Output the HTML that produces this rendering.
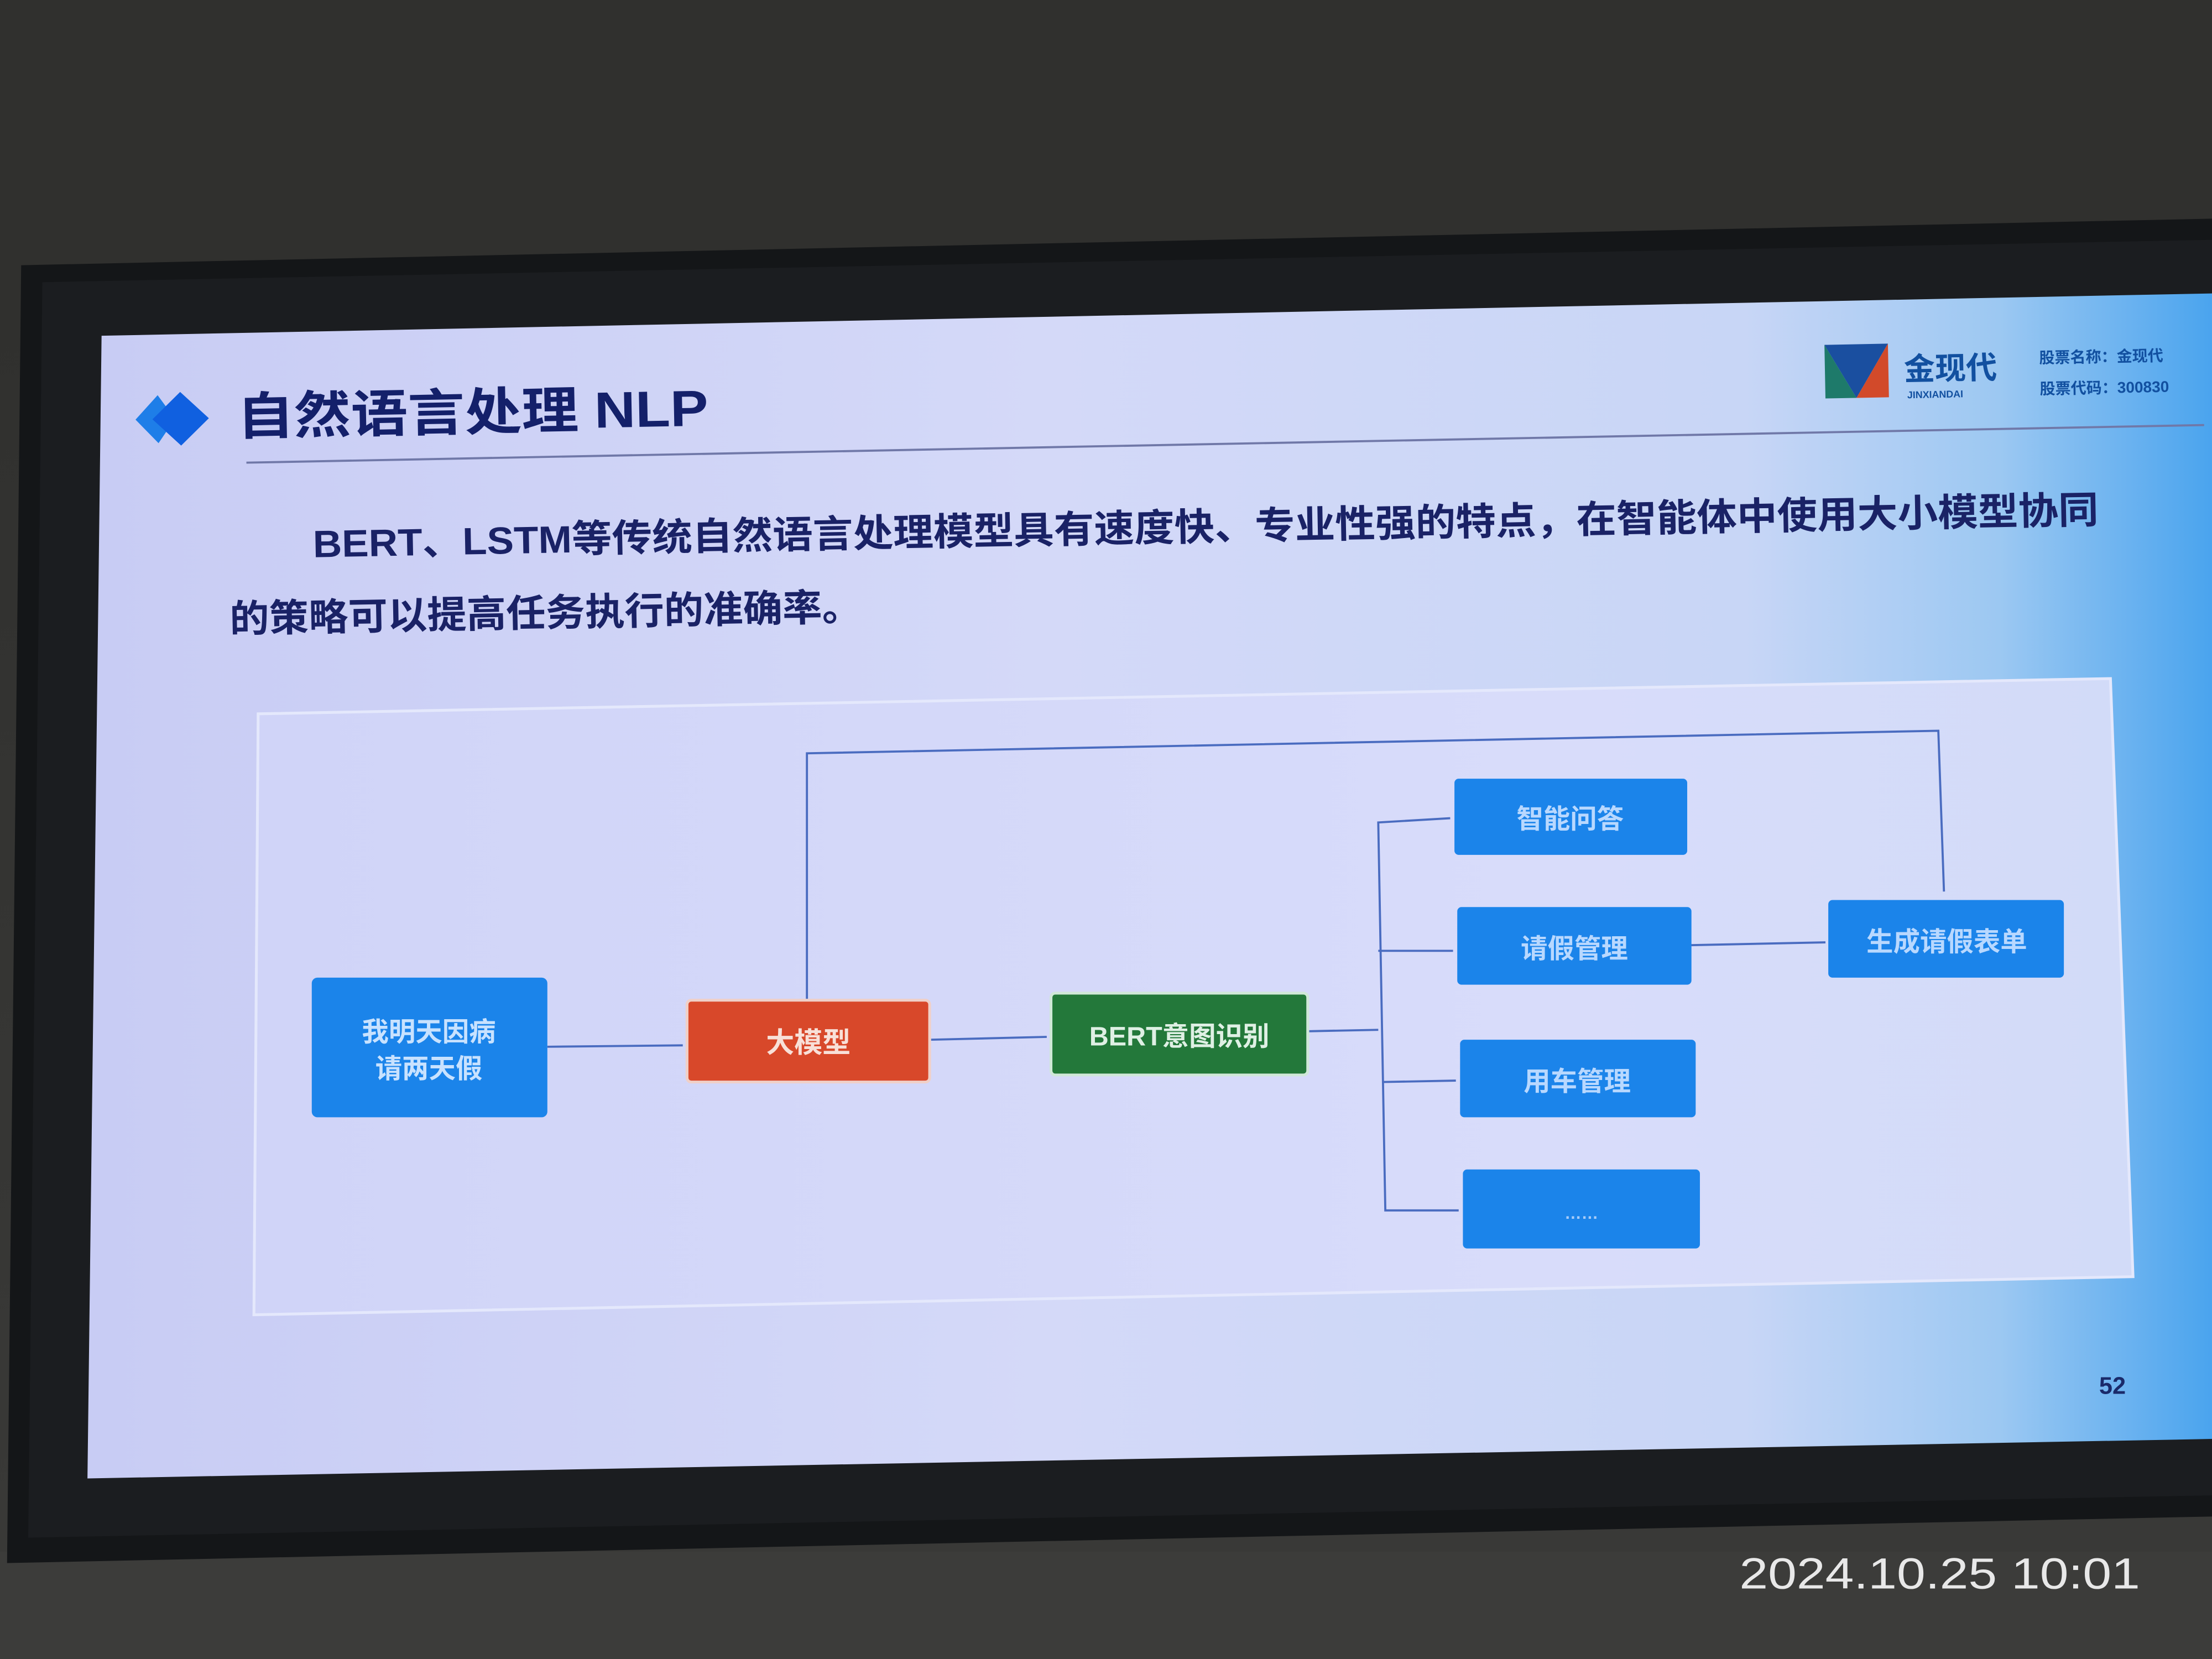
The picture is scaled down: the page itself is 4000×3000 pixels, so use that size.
<!DOCTYPE html>
<html><head><meta charset="utf-8"><style>
html,body{margin:0;padding:0;background:#2b2b2b;}
svg{display:block;}
text{font-family:"Liberation Sans","Noto Sans CJK SC",sans-serif;font-weight:bold;}
</style></head><body>
<svg width="4000" height="3000" viewBox="0 0 1568 1176" preserveAspectRatio="none" xmlns="http://www.w3.org/2000/svg">
<defs>
<linearGradient id="wall" x1="0" y1="0" x2="0" y2="1">
<stop offset="0" stop-color="#2e2e2c"/><stop offset="1" stop-color="#3a3a38"/></linearGradient>
<linearGradient id="scr" x1="0" y1="0" x2="1" y2="0">
<stop offset="0" stop-color="#c8ccf4"/><stop offset="0.45" stop-color="#d4d9f8"/>
<stop offset="0.78" stop-color="#c8d6f6"/><stop offset="0.9" stop-color="#9cc8f2"/><stop offset="1" stop-color="#4aa4ee"/></linearGradient>
<linearGradient id="box" x1="0" y1="0" x2="1" y2="0">
<stop offset="0" stop-color="#d0d4f8"/><stop offset="0.7" stop-color="#d8dcfa"/><stop offset="1" stop-color="#d2dbf8"/></linearGradient>
</defs>
<rect width="1568" height="1176" fill="url(#wall)"/>
<rect y="0" width="1568" height="190" fill="#30302e"/>
<rect y="1100" width="1568" height="76" fill="#3c3c3a"/>
<polygon points="15,188 1568,155 1568,1075 5,1108" fill="#141618"/>
<polygon points="30,200 1568,170 1568,1060 20,1090" fill="#1b1d20"/>
<polygon points="72,238 1568,208 1568,1020 62,1048" fill="url(#scr)"/>
<g transform="rotate(-1.1 800 600)">
<polygon points="102,284 118,267 130,284 118,301" fill="#1e7ee8"/>
<polygon points="114,284 134,265 154,284 134,303" fill="#1060e0"/>
<text x="174" y="296" font-size="36" fill="#14206a" textLength="334" lengthAdjust="spacingAndGlyphs">自然语言处理 NLP</text>
<line x1="180" y1="316" x2="1568" y2="316" stroke="#7078a8" stroke-width="1.5"/>
<polygon points="1300,254 1345,254 1322,292" fill="#1a4fa0"/>
<polygon points="1300,254 1322,292 1300,292" fill="#1e7a6a"/>
<polygon points="1345,254 1322,292 1345,292" fill="#d24a2a"/>
<text x="1356" y="280" font-size="22" fill="#1250a0">金现代</text>
<text x="1358" y="293" font-size="7" fill="#1250a0">JINXIANDAI</text>
<text x="1452" y="270" font-size="11" fill="#1250a0">股票名称：金现代</text>
<text x="1452" y="292" font-size="11" fill="#1250a0">股票代码：300830</text>
<text x="226" y="384" font-size="27" fill="#1a2266" textLength="1266" lengthAdjust="spacingAndGlyphs">BERT、LSTM等传统自然语言处理模型具有速度快、专业性强的特点，在智能体中使用大小模型协同</text>
<text x="166" y="436" font-size="27" fill="#1a2266" textLength="448" lengthAdjust="spacingAndGlyphs">的策略可以提高任务执行的准确率。</text>
</g>
<polygon points="183,506 1496,481 1512,905 180,932" fill="url(#box)" stroke="#e4e8fc" stroke-width="2"/>
<g stroke="#4a6cc0" stroke-width="1.5" fill="none">
<polyline points="572,712 572,534 1374,518 1378,632"/>
<line x1="388" y1="742" x2="484" y2="741"/>
<line x1="660" y1="737" x2="742" y2="735"/>
<line x1="928" y1="731" x2="977" y2="730"/>
<polyline points="1028,580 977,583 982,858 1034,858"/>
<line x1="977" y1="674" x2="1030" y2="674"/>
<line x1="980" y1="767" x2="1032" y2="766"/>
<line x1="1198" y1="670" x2="1294" y2="668"/>
</g>
<rect x="221" y="693" width="167" height="99" rx="4" fill="#1b84ea"/>
<text x="304" y="738" font-size="19" fill="#c8e2ff" text-anchor="middle">我明天因病</text>
<text x="304" y="764" font-size="19" fill="#c8e2ff" text-anchor="middle">请两天假</text>
<rect x="487" y="709" width="172" height="58" rx="3" fill="#d8482a" stroke="#f0d0c8" stroke-width="2"/>
<text x="573" y="746" font-size="20" fill="#f8e0d8" text-anchor="middle">大模型</text>
<rect x="745" y="704" width="182" height="58" rx="3" fill="#23783a" stroke="#d0e8d8" stroke-width="2"/>
<text x="836" y="741" font-size="19" fill="#dff0e4" text-anchor="middle">BERT意图识别</text>
<rect x="1031" y="552" width="165" height="54" rx="3" fill="#1b84ea"/>
<text x="1113" y="587" font-size="19" fill="#b8d8ff" text-anchor="middle">智能问答</text>
<rect x="1033" y="643" width="166" height="55" rx="3" fill="#1b84ea"/>
<text x="1116" y="679" font-size="19" fill="#b8d8ff" text-anchor="middle">请假管理</text>
<rect x="1035" y="737" width="167" height="55" rx="3" fill="#1b84ea"/>
<text x="1118" y="773" font-size="19" fill="#b8d8ff" text-anchor="middle">用车管理</text>
<rect x="1037" y="829" width="168" height="56" rx="3" fill="#1b84ea"/>
<text x="1121" y="864" font-size="12" fill="#a8ccf8" text-anchor="middle">……</text>
<rect x="1296" y="638" width="167" height="55" rx="3" fill="#1b84ea"/>
<text x="1380" y="674" font-size="19" fill="#b8d8ff" text-anchor="middle">生成请假表单</text>
<text x="1488" y="988" font-size="17" fill="#1a2a6a">52</text>
<text x="1233" y="1126" font-size="31" fill="#e8e8e8" style="font-weight:normal" textLength="284" lengthAdjust="spacingAndGlyphs">2024.10.25  10:01</text>
</svg>
</body></html>
